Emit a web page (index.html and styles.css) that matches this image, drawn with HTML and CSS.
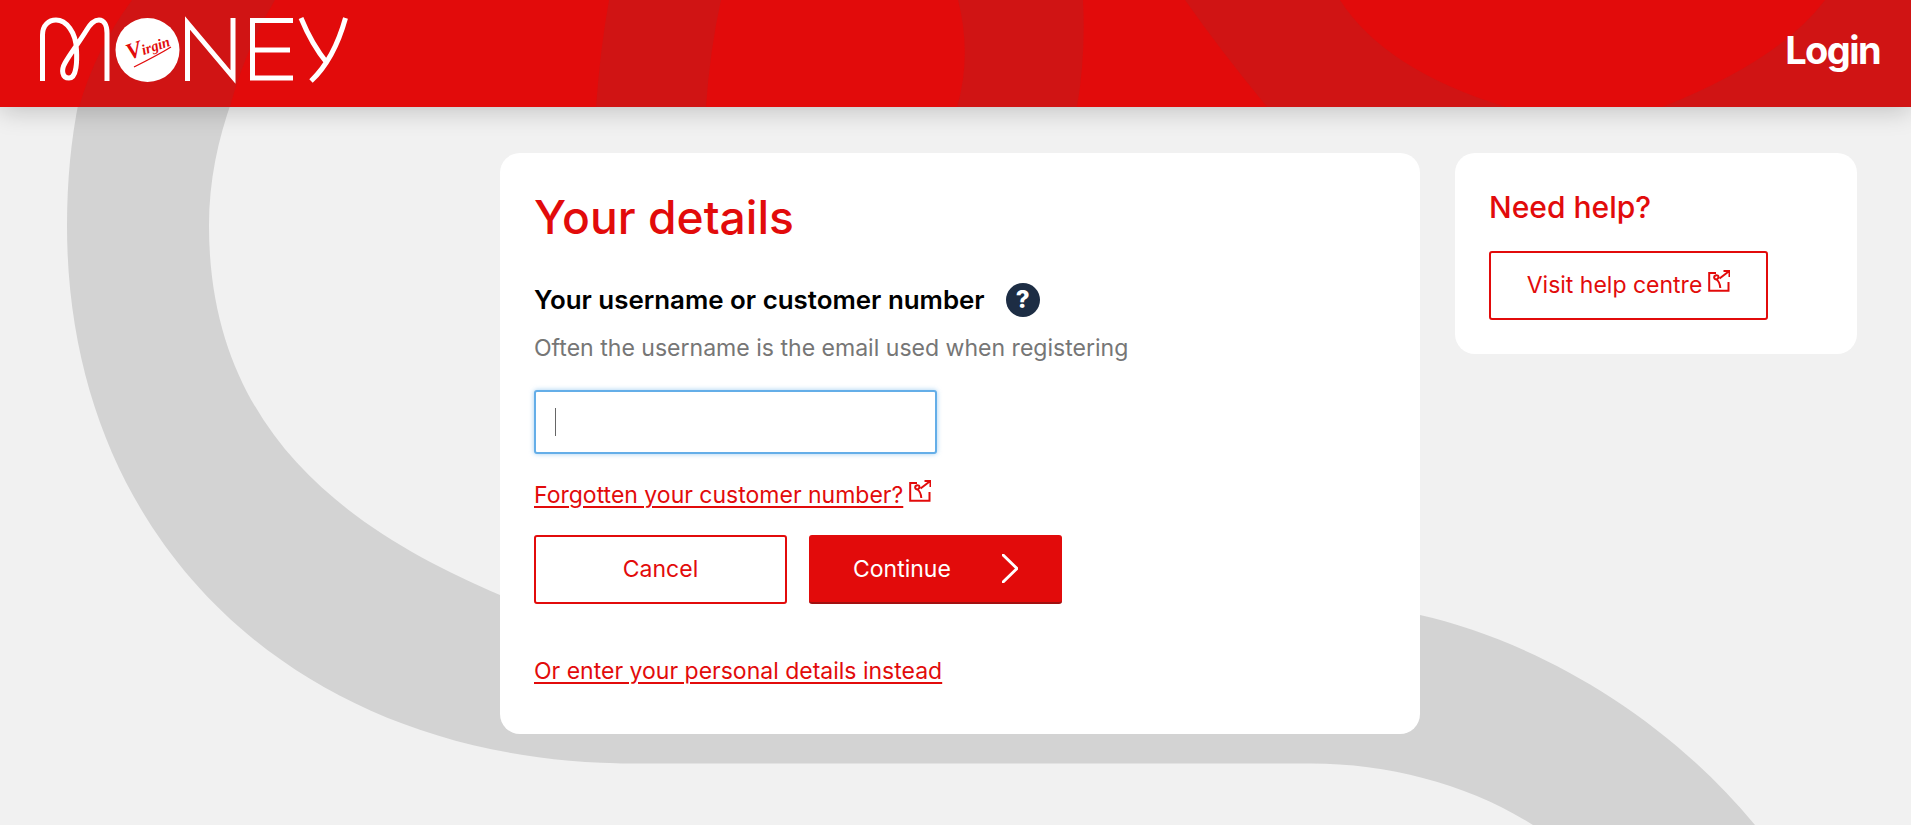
FILE: index.html
```html
<!DOCTYPE html>
<html lang="en">
<head>
<meta charset="utf-8">
<title>Your details</title>
<link rel="stylesheet" href="styles.css">
</head>
<body>
<svg class="page-swoosh" viewBox="0 0 1911 825" aria-hidden="true">
  <path d="M79 100C71 140 67 180 67 226C67 545 300 763.5 634 763.5H1311C1390 763.5 1470 785 1533 825H1755C1660 710 1530 640 1420 615L1000 600L500 595C360 535 209 440 209 226C209 180 218 140 232 100Z"/>
</svg>
<header class="site-header">
  <svg class="header-bands" viewBox="0 0 1911 107" aria-hidden="true">
    <path d="M132 0H275Q245 50 230 107H79Q95 50 132 0Z"/>
    <path d="M609 0H721Q710 50 706 107H596Q600 50 609 0Z"/>
    <path d="M958 0H1083Q1086 55 1077 107H957Q972 55 958 0Z"/>
    <path d="M1185 0H1340Q1385 70 1506 107H1267Q1220 50 1185 0Z"/>
    <path d="M1825 0H1911V107H1662Q1780 60 1825 0Z"/>
  </svg>
  <svg class="logo" viewBox="40 16 310 68" role="img" aria-label="Virgin Money">
    <g class="logo-strokes">
      <path d="M42.5 81V35C42.5 25 49 20 56 20C66 20 76 32 76.5 50C77 60 77 78 69 78C62 78 61 70 65 63C70 54 78 44 86 31C90 24 95 20 99 20C104 20 107 25 107 33V81"/>
      <path d="M187.5 81V23L233 77V18"/>
      <path d="M293 20.5H252.5V78H293M252.5 50H290"/>
      <path d="M345.5 18C338 45 328 65 311 81M301 18C310 40 318 52 327 63"/>
    </g>
    <circle class="logo-disc" cx="147.5" cy="50" r="32"/>
    <text class="logo-word" transform="translate(129 60) rotate(-19)"><tspan class="logo-initial">V</tspan>irgin</text>
    <path class="logo-swash" d="M134 67C146 61 158 55 171 47"/>
  </svg>
  <a class="login" href="#">Login</a>
</header>
<main class="content">
  <section class="card details">
    <h1 class="details-title">Your details</h1>
    <div class="label-row">
      <label class="field-label" for="username">Your username or customer number</label>
      <span class="help-dot">?</span>
    </div>
    <p class="hint">Often the username is the email used when registering</p>
    <div class="input-wrap">
      <input class="text-input" id="username" type="text">
      <span class="caret"></span>
    </div>
    <p class="link-line">
      <a class="text-link" href="#">Forgotten your customer number?</a><svg class="ext-icon" viewBox="0 0 22 22" aria-hidden="true"><path d="M8 3H1.2V20.8H20.5V12M8.5 9.5C6 9.5 5 6 8 5.2C11 4.8 11.3 8.3 8.5 9.5C10.5 11 12 13 12.3 18M11.5 8.5L21 1.2M15.5 1H21.5V7"/></svg>
    </p>
    <div class="actions">
      <a class="btn btn-outline" href="#">Cancel</a>
      <a class="btn btn-solid" href="#">
        <span>Continue</span>
        <svg class="chevron" viewBox="0 0 16 29" aria-hidden="true"><path d="M1 1L15 14.5L1 28"/></svg>
      </a>
    </div>
    <p class="alt-line"><a class="text-link" href="#">Or enter your personal details instead</a></p>
  </section>
  <aside class="card help">
    <h2 class="help-title">Need help?</h2>
    <a class="btn btn-outline btn-help" href="#">
      <span>Visit help centre<svg class="ext-icon" viewBox="0 0 22 22" aria-hidden="true"><path d="M8 3H1.2V20.8H20.5V12M8.5 9.5C6 9.5 5 6 8 5.2C11 4.8 11.3 8.3 8.5 9.5C10.5 11 12 13 12.3 18M11.5 8.5L21 1.2M15.5 1H21.5V7"/></svg></span>
    </a>
  </aside>
</main>
</body>
</html>
```
FILE: styles.css
```css
* { box-sizing: border-box; }
html, body { margin: 0; height: 100%; }
body {
  position: relative;
  min-height: 825px;
  overflow: hidden;
  background: #f1f1f1;
  font-family: Inter, "Liberation Sans", sans-serif;
  color: #000;
}
a { color: inherit; text-decoration: none; }
h1, h2, p { margin: 0; }

.page-swoosh {
  position: absolute;
  top: 0;
  left: 0;
  width: 1911px;
  height: 825px;
  fill: #d3d3d3;
}

.site-header {
  position: relative;
  display: flex;
  justify-content: space-between;
  align-items: flex-start;
  height: 107px;
  padding: 16px 31px 0 40px;
  background: #e20b0b;
  box-shadow: 0 4px 24px rgba(0, 0, 0, .2);
}
.header-bands {
  position: absolute;
  top: 0;
  left: 0;
  width: 1911px;
  height: 107px;
  fill: #d01414;
}
.logo {
  position: relative;
  width: 310px;
  height: 68px;
  display: block;
}
.logo-strokes {
  fill: none;
  stroke: #fff;
  stroke-width: 5;
}
.logo-disc { fill: #fff; }
.logo-word {
  font-family: "Liberation Serif", serif;
  font-style: italic;
  font-weight: 700;
  font-size: 14.5px;
  fill: #e20b0b;
}
.logo-initial { font-size: 23px; }
.logo-swash {
  fill: none;
  stroke: #e20b0b;
  stroke-width: 1.3;
}
.login {
  position: relative;
  margin-top: 12px;
  font-size: 38px;
  line-height: 44px;
  letter-spacing: -1.6px;
  font-weight: 700;
  color: #fff;
}

.content {
  position: relative;
  display: flex;
  align-items: flex-start;
  gap: 35px;
  padding: 46px 0 0 500px;
}
.card {
  background: #fff;
  border-radius: 20px;
  padding-left: 34px;
}
.details {
  width: 920px;
  height: 581px;
  padding-top: 36px;
}
.details-title {
  font-size: 46.2px;
  line-height: 56px;
  font-weight: 450;
  color: #e20b0b;
}
.label-row {
  display: flex;
  align-items: center;
  gap: 21px;
  margin-top: 38px;
}
.field-label {
  font-size: 25.9px;
  line-height: 30px;
  font-weight: 600;
}
.help-dot {
  width: 34px;
  height: 34px;
  border-radius: 50%;
  background: #1d2d44;
  color: #fff;
  font-size: 24px;
  line-height: 34px;
  font-weight: 800;
  text-align: center;
}
.hint {
  margin-top: 17px;
  font-size: 23.05px;
  line-height: 28px;
  color: #767676;
}
.input-wrap {
  position: relative;
  width: 403px;
  margin-top: 28px;
}
.text-input {
  display: block;
  width: 100%;
  height: 64px;
  background: #fff;
  border: 2px solid #64aee8;
  border-radius: 3px;
  box-shadow: 0 0 5px rgba(100, 174, 232, .6);
  outline: none;
}
.caret {
  position: absolute;
  left: 21px;
  top: 18px;
  width: 1px;
  height: 28px;
  background: #666;
}
.link-line {
  margin-top: 26px;
  font-size: 23px;
  line-height: 28px;
  color: #e20b0b;
}
.text-link {
  text-decoration: underline;
  text-decoration-thickness: 2px;
  text-underline-offset: 3px;
}
.ext-icon {
  width: 22px;
  height: 22px;
  margin-left: 6px;
  vertical-align: 1px;
  fill: none;
  stroke: #e20b0b;
  stroke-width: 2;
}
.actions {
  display: flex;
  gap: 22px;
  margin-top: 26px;
}
.btn {
  display: flex;
  align-items: center;
  justify-content: center;
  height: 69px;
  padding-bottom: 2px;
  border-radius: 3px;
  font-size: 23px;
  color: #e20b0b;
}
.btn-outline {
  width: 253px;
  background: #fff;
  border: 2px solid #e20b0b;
}
.btn-solid {
  width: 253px;
  justify-content: space-between;
  padding: 0 44px;
  background: #e20b0b;
  border-bottom: 2px solid #a01010;
  color: #fff;
}
.chevron {
  width: 16px;
  height: 29px;
  fill: none;
  stroke: #fff;
  stroke-width: 3;
  stroke-linecap: round;
}
.alt-line {
  margin-top: 53px;
  font-size: 23px;
  line-height: 28px;
  color: #e20b0b;
}
.help {
  width: 402px;
  height: 201px;
  padding-top: 36px;
}
.help-title {
  font-size: 30px;
  line-height: 36px;
  font-weight: 500;
  color: #e20b0b;
}
.btn-help {
  width: 279px;
  margin-top: 26px;
  padding-bottom: 3px;
}
```
